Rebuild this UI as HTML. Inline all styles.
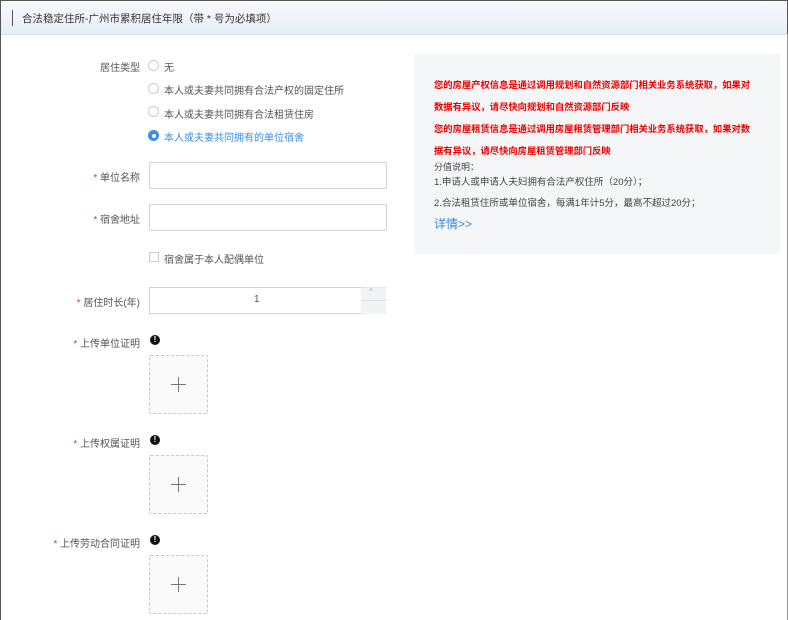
<html><head><style>
body{margin:0;width:788px;height:620px;overflow:hidden;background:#fff;font-family:"Liberation Sans","Noto Sans CJK SC",sans-serif;color:#555;position:relative}
.a{position:absolute;white-space:nowrap}
.hdr{position:absolute;left:0;top:0;width:786px;height:33px;border:1px solid #555;border-bottom:1px solid #d8dee6;background:linear-gradient(#f7f9fc,#e8eef6)}
.lab{font-size:10px;color:#555;text-align:right;width:120px;left:20px}
.st{color:#e33}
.rad{width:9px;height:9px;border:1px solid #ccc;border-radius:50%;left:148px}
.rt{font-size:10px;left:164px}
.inp{left:149px;width:236px;height:25px;border:1px solid #d0d4da;border-radius:2px;background:#fff}
.up{left:149px;width:57px;height:57px;border:1px dashed #c6c9cf;background:#fafafa;border-radius:2px}
.up:before{content:"";position:absolute;left:21px;top:28px;width:15px;height:1px;background:#777}
.up:after{content:"";position:absolute;left:28px;top:21px;width:1px;height:15px;background:#777}
.ic{width:10px;height:10px;border-radius:50%;background:#111;color:#fff;font-size:8px;font-weight:bold;text-align:center;line-height:10px;left:150px}
.red{color:#e00;font-size:9.3px;font-weight:bold;left:434px}
.g{font-size:9.5px;color:#444;left:434px}
</style></head><body>
<div class="hdr"></div>
<div class="a" style="left:12px;top:10px;width:1px;height:16px;background:#555"></div>
<div class="a" style="left:22px;top:11px;font-size:10.5px;color:#333">合法稳定住所-广州市累积居住年限（带 * 号为必填项）</div>
<div class="a" style="left:0;top:34px;width:1px;height:586px;background:#555"></div>
<div class="a" style="left:787px;top:34px;width:1px;height:586px;background:#999"></div>

<div class="a lab" style="top:59px">居住类型</div>
<div class="a rad" style="top:60px"></div><div class="a rt" style="top:59px">无</div>
<div class="a rad" style="top:83px"></div><div class="a rt" style="top:82px">本人或夫妻共同拥有合法产权的固定住所</div>
<div class="a rad" style="top:106px"></div><div class="a rt" style="top:106px">本人或夫妻共同拥有合法租赁住房</div>
<div class="a rad" style="top:130px;border-color:#3a8ee6;background:#3a8ee6"></div><div class="a" style="left:151.5px;top:133.5px;width:4px;height:4px;border-radius:50%;background:#fff"></div><div class="a rt" style="top:129px;color:#3a8ee6">本人或夫妻共同拥有的单位宿舍</div>

<div class="a lab" style="top:169px"><span class="st">* </span>单位名称</div>
<div class="a inp" style="top:162px"></div>
<div class="a lab" style="top:211px"><span class="st">* </span>宿舍地址</div>
<div class="a inp" style="top:204px"></div>
<div class="a" style="left:149px;top:252px;width:8px;height:8px;border:1px solid #ccc"></div>
<div class="a rt" style="top:251px">宿舍属于本人配偶单位</div>
<div class="a lab" style="top:294px"><span class="st">* </span>居住时长(年)</div>
<div class="a" style="left:149px;top:287px;width:211px;height:25px;border:1px solid #d0d4da"></div>
<div class="a" style="left:254px;top:294px;font-size:10px">1</div>
<div class="a" style="left:361px;top:287px;width:25px;height:26px;background:#f2f3f5;border-top:1px solid #e5e5e5"></div>
<div class="a" style="left:361px;top:300px;width:25px;height:1px;background:#ddd"></div>
<div class="a" style="left:369px;top:287px;font-size:8px;color:#aaa">^</div>

<div class="a lab" style="top:335px"><span class="st">* </span>上传单位证明</div>
<div class="a ic" style="top:335px">!</div>
<div class="a up" style="top:355px"></div>
<div class="a lab" style="top:435px"><span class="st">* </span>上传权属证明</div>
<div class="a ic" style="top:435px">!</div>
<div class="a up" style="top:455px"></div>
<div class="a lab" style="top:535px"><span class="st">* </span>上传劳动合同证明</div>
<div class="a ic" style="top:535px">!</div>
<div class="a up" style="top:555px"></div>

<div class="a" style="left:414px;top:54px;width:366px;height:200px;background:#f5f6f8"></div>
<div class="a red" style="top:77px">您的房屋产权信息是通过调用规划和自然资源部门相关业务系统获取，如果对</div>
<div class="a red" style="top:99px">数据有异议，请尽快向规划和自然资源部门反映</div>
<div class="a red" style="top:121px">您的房屋租赁信息是通过调用房屋租赁管理部门相关业务系统获取，如果对数</div>
<div class="a red" style="top:143px">据有异议，请尽快向房屋租赁管理部门反映</div>
<div class="a" style="left:434px;top:160px;font-size:9px;color:#444">分值说明：</div>
<div class="a g" style="top:174px">1.申请人或申请人夫妇拥有合法产权住所（20分）；</div>
<div class="a g" style="top:195px">2.合法租赁住所或单位宿舍，每满1年计5分，最高不超过20分；</div>
<div class="a" style="left:434px;top:215px;font-size:12px;color:#3a86d6">详情&gt;&gt;</div>
</body></html>
